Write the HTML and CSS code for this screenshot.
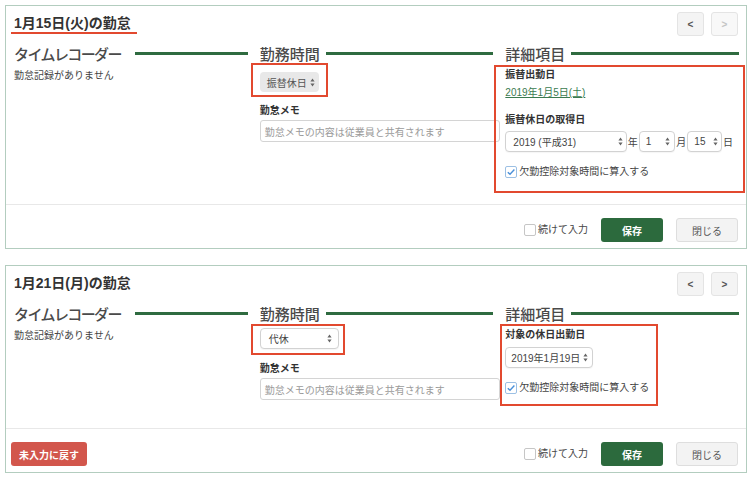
FILE: index.html
```html
<!DOCTYPE html>
<html lang="ja">
<head>
<meta charset="utf-8">
<title>勤怠</title>
<link rel="stylesheet" href="styles.css">
</head>
<body>
<div class="page">

  <section class="panel">
    <header class="panel-head">
      <h1 class="panel-title"><span class="title-mark">1月15日(火)の勤怠</span></h1>
      <div class="nav">
        <button class="nav-btn">&lt;</button>
        <button class="nav-btn is-disabled">&gt;</button>
      </div>
    </header>
    <div class="cols cols--tall">
      <div class="col">
        <h2 class="sec"><span class="sec-text sec-text--kana">タイムレコーダー</span><span class="sec-line"></span></h2>
        <p class="note">勤怠記録がありません</p>
      </div>
      <div class="col">
        <h2 class="sec"><span class="sec-text">勤務時間</span><span class="sec-line"></span></h2>
        <div class="mark mark--kind-a">
          <div class="select select--gray">振替休日<svg class="arr" width="5" height="9" viewBox="0 0 5 9"><path d="M2.5 0.5L4.6 3.6H0.4Z M2.5 8.5L0.4 5.4H4.6Z" fill="#666"/></svg></div>
        </div>
        <div class="label label--memo">勤怠メモ</div>
        <div class="input">勤怠メモの内容は従業員と共有されます</div>
      </div>
      <div class="col">
        <h2 class="sec"><span class="sec-text">詳細項目</span><span class="sec-line"></span></h2>
        <div class="mark mark--detail-a">
          <div class="label">振替出動日</div>
          <a class="link" href="#">2019年1月5日(土)</a>
          <div class="label label--gap">振替休日の取得日</div>
          <div class="date-row">
            <div class="select select--year">2019 (平成31)<svg class="arr" width="5" height="9" viewBox="0 0 5 9"><path d="M2.5 0.5L4.6 3.6H0.4Z M2.5 8.5L0.4 5.4H4.6Z" fill="#666"/></svg></div>
            <span class="unit">年</span>
            <div class="select select--month">1<svg class="arr" width="5" height="9" viewBox="0 0 5 9"><path d="M2.5 0.5L4.6 3.6H0.4Z M2.5 8.5L0.4 5.4H4.6Z" fill="#666"/></svg></div>
            <span class="unit">月</span>
            <div class="select select--day">15<svg class="arr" width="5" height="9" viewBox="0 0 5 9"><path d="M2.5 0.5L4.6 3.6H0.4Z M2.5 8.5L0.4 5.4H4.6Z" fill="#666"/></svg></div>
            <span class="unit">日</span>
          </div>
          <label class="check check--detail"><span class="box is-checked"><svg width="10" height="10" viewBox="0 0 10 10"><path d="M1.8 5.2L4 7.3L8.4 2.6" stroke="#4a90d9" stroke-width="1.4" fill="none"/></svg></span>欠勤控除対象時間に算入する</label>
        </div>
      </div>
    </div>
    <footer class="panel-foot">
      <div class="foot-left"></div>
      <div class="foot-right">
        <label class="check"><span class="box"></span>続けて入力</label>
        <button class="btn btn--save">保存</button>
        <button class="btn btn--close">閉じる</button>
      </div>
    </footer>
  </section>

  <section class="panel">
    <header class="panel-head">
      <h1 class="panel-title">1月21日(月)の勤怠</h1>
      <div class="nav">
        <button class="nav-btn">&lt;</button>
        <button class="nav-btn">&gt;</button>
      </div>
    </header>
    <div class="cols cols--short">
      <div class="col">
        <h2 class="sec"><span class="sec-text sec-text--kana">タイムレコーダー</span><span class="sec-line"></span></h2>
        <p class="note">勤怠記録がありません</p>
      </div>
      <div class="col">
        <h2 class="sec"><span class="sec-text">勤務時間</span><span class="sec-line"></span></h2>
        <div class="mark mark--kind-b">
          <div class="select select--white">代休<svg class="arr" width="5" height="9" viewBox="0 0 5 9"><path d="M2.5 0.5L4.6 3.6H0.4Z M2.5 8.5L0.4 5.4H4.6Z" fill="#666"/></svg></div>
        </div>
        <div class="label label--memo">勤怠メモ</div>
        <div class="input">勤怠メモの内容は従業員と共有されます</div>
      </div>
      <div class="col">
        <h2 class="sec"><span class="sec-text">詳細項目</span><span class="sec-line"></span></h2>
        <div class="mark mark--detail-b">
          <div class="label">対象の休日出勤日</div>
          <div class="select select--date">2019年1月19日<svg class="arr" width="5" height="9" viewBox="0 0 5 9"><path d="M2.5 0.5L4.6 3.6H0.4Z M2.5 8.5L0.4 5.4H4.6Z" fill="#666"/></svg></div>
          <label class="check check--detail"><span class="box is-checked"><svg width="10" height="10" viewBox="0 0 10 10"><path d="M1.8 5.2L4 7.3L8.4 2.6" stroke="#4a90d9" stroke-width="1.4" fill="none"/></svg></span>欠勤控除対象時間に算入する</label>
        </div>
      </div>
    </div>
    <footer class="panel-foot">
      <div class="foot-left">
        <button class="btn btn--reset">未入力に戻す</button>
      </div>
      <div class="foot-right">
        <label class="check"><span class="box"></span>続けて入力</label>
        <button class="btn btn--save">保存</button>
        <button class="btn btn--close">閉じる</button>
      </div>
    </footer>
  </section>

</div>
</body>
</html>
```
FILE: styles.css
```css
* { box-sizing: border-box; }

html, body {
  margin: 0;
  padding: 0;
  background: #fff;
}

body {
  font-family: "Liberation Sans", "Noto Sans CJK JP", sans-serif;
  font-size: 10px;
  color: #333;
}

.page {
  padding: 5px 0 0 5px;
  display: flex;
  flex-direction: column;
  gap: 16px;
}

.panel {
  width: 742px;
  border: 1px solid #b3cdbf;
  background: #fff;
}

/* header */
.panel-head {
  height: 37px;
  padding: 6px 8px 0 8px;
  display: flex;
  justify-content: space-between;
  align-items: flex-start;
}

.panel-title {
  margin: 2px 0 0;
  font-size: 14px;
  line-height: 18px;
  font-weight: 700;
  color: #333;
}

.title-mark {
  display: inline-block;
  margin-left: -3px;
  padding: 0 6px 0 3px;
  border-bottom: 2px solid #e2492f;
}

.nav {
  display: flex;
  gap: 7px;
}

.nav-btn {
  width: 27px;
  height: 24px;
  padding: 0;
  border: 1px solid #e4e4e4;
  border-radius: 3px;
  background: #f4f4f4;
  color: #555;
  font-family: "Liberation Sans", sans-serif;
  font-size: 10px;
  font-weight: 700;
}

.nav-btn.is-disabled {
  color: #c4c4c4;
  background: #f8f8f8;
}

/* columns */
.cols {
  display: grid;
  grid-template-columns: 1fr 1fr 1fr;
  gap: 12px;
  padding: 0 7px 0 8px;
}

.cols--tall { min-height: 161px; }
.cols--short { min-height: 125px; }

.col {
  display: flex;
  flex-direction: column;
  align-items: flex-start;
  min-width: 0;
}

.sec {
  width: 100%;
  margin: 0;
  display: flex;
  align-items: center;
  height: 20px;
  font-size: 15px;
  font-weight: 500;
  color: #4a4a4a;
}

.sec-text {
  white-space: nowrap;
  margin-right: 6px;
}

.sec-text--kana {
  letter-spacing: -1.6px;
  margin-right: 14px;
}

.sec-line {
  flex: 1;
  height: 3px;
  background: #2f6b40;
  margin-top: 1px;
}

.note {
  margin: 6px 0 0;
  line-height: 14px;
  color: #444;
}

/* annotation boxes */
.mark {
  border: 2px solid #e2492f;
}

.mark--kind-a {
  margin-left: -9px;
  padding: 7px 7px 3px 7px;
}

.mark--kind-b {
  margin: 1px 0 0 -9px;
  padding: 2px 4px 4px 7px;
}

.mark--detail-a {
  align-self: stretch;
  margin: 2px -6px 0 -11px;
  padding: 1px 9px 12px 9px;
}

.mark--detail-b {
  margin: 1px 0 0 -5px;
  padding: 2px 7px 9px 3px;
}

/* selects */
.select {
  display: flex;
  align-items: center;
  justify-content: space-between;
  height: 21px;
  border-radius: 4px;
  font-size: 10px;
  color: #444;
  white-space: nowrap;
}

.arr { flex: none; }

.select--gray {
  width: 59px;
  height: 20px;
  padding: 0 4px 0 7px;
  background: #e8e8e8;
  color: #555;
}

.select--white,
.select--year,
.select--month,
.select--day,
.select--date {
  background: #fff;
  border: 1px solid #d2d2d2;
  box-shadow: 0 1px 1px rgba(0, 0, 0, 0.04);
}

.select--white {
  width: 79px;
  padding: 0 6px 0 8px;
}

.select--year {
  width: 123px;
  padding: 0 3px 0 7px;
}

.select--month {
  width: 37px;
  padding: 0 4px 0 6px;
}

.select--day {
  width: 35px;
  padding: 0 3px 0 6px;
}

.select--date {
  width: 88px;
  margin-top: 5px;
  padding: 0 4px 0 5px;
}

.date-row {
  display: flex;
  align-items: center;
  margin-top: 4px;
}

.unit {
  margin: 0 1px;
  font-size: 10px;
  color: #444;
}

/* labels & inputs */
.label {
  font-weight: 700;
  line-height: 14px;
  color: #333;
}

.label--memo {
  margin-top: 7px;
}

.label--gap {
  margin-top: 13px;
}

.link {
  display: block;
  margin-top: 4px;
  line-height: 14px;
  color: #3b7b50;
  text-decoration: underline;
}

.input {
  width: 240px;
  height: 22px;
  margin-top: 2px;
  padding: 0 4px;
  display: flex;
  align-items: center;
  border: 1px solid #d4d4d4;
  border-radius: 3px;
  background: #fff;
  color: #9a9a9a;
  white-space: nowrap;
}

/* checkboxes */
.check {
  display: flex;
  align-items: center;
  gap: 2px;
  line-height: 14px;
  color: #444;
  white-space: nowrap;
}

.check--detail {
  margin-top: 13px;
}

.box {
  width: 12px;
  height: 12px;
  flex: none;
  display: flex;
  align-items: center;
  justify-content: center;
  border: 1px solid #c6c6c6;
  border-radius: 2px;
  background: #fff;
}

.box.is-checked {
  border-color: #9cc0e4;
}

/* footer */
.panel-foot {
  display: flex;
  justify-content: space-between;
  align-items: center;
  padding: 13px 8px 6px 5px;
  border-top: 1px solid #e8e8e8;
}

.foot-right {
  display: flex;
  align-items: center;
  gap: 13px;
}

.btn {
  height: 24px;
  padding: 0;
  border: none;
  border-radius: 3px;
  font-family: "Liberation Sans", "Noto Sans CJK JP", sans-serif;
  font-size: 10px;
}

.btn--save {
  width: 62px;
  background: #2c6a3d;
  color: #fff;
  font-weight: 700;
}

.btn--close {
  width: 62px;
  background: #f3f3f3;
  border: 1px solid #dedede;
  color: #555;
}

.btn--reset {
  width: 76px;
  background: #d2564c;
  color: #fff;
  font-weight: 700;
}
```
